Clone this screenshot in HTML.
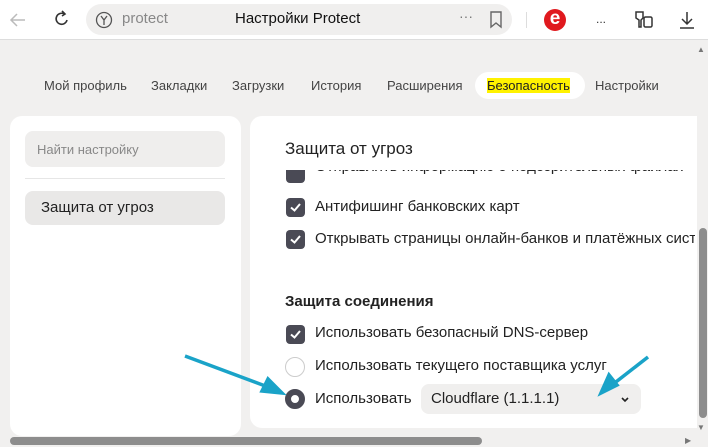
<!DOCTYPE html>
<html><head><meta charset="utf-8"><style>
*{margin:0;padding:0;box-sizing:border-box}
body{width:708px;height:447px;overflow:hidden;background:#f1f0ef;font-family:"Liberation Sans",sans-serif;position:relative;color:#222}
.top{position:absolute;left:0;top:0;width:708px;height:40px;background:#fff;border-bottom:1px solid #ddd}
.abs{position:absolute}
.addr{position:absolute;left:86px;top:4px;width:426px;height:31px;border-radius:16px;background:#f0efee}
.tab{position:absolute;top:78px;font-size:13px;color:#444}
.panel{position:absolute;background:#fff;border-radius:12px}
.cb{position:absolute;left:286px;width:19px;height:19px;border-radius:4px;background:#4a4a55}
.cb svg{position:absolute;left:3px;top:4px}
.t{position:absolute;left:315px;font-size:15px;color:#222;white-space:nowrap}
</style></head><body>
<div class="top">
 <svg class="abs" style="left:8px;top:10px" width="20" height="20"><path d="M17 10H3M9 4L3 10l6 6" stroke="#bbb" stroke-width="1.5" fill="none"/></svg>
 <div class="addr"></div>
 <svg class="abs" style="left:52px;top:9px" width="20" height="20"><path d="M15 11a5.5 5.5 0 1 1-3-6.2" stroke="#333" stroke-width="1.6" fill="none"/><path d="M10 2l3 3-3 2" stroke="#333" stroke-width="1.6" fill="none"/></svg>
 <svg class="abs" style="left:95px;top:11px" width="18" height="18"><circle cx="9" cy="9" r="7.5" stroke="#555" stroke-width="1.3" fill="none"/><path d="M6 5l3 4 3-4M9 9v5" stroke="#555" stroke-width="1.3" fill="none"/></svg>
 <div class="abs" style="left:122px;top:10px;font-size:15px;color:#888">protect</div>
 <div class="abs" style="left:235px;top:10px;font-size:15px;color:#111">Настройки Protect</div>
 <div class="abs" style="left:459px;top:8px;font-size:14px;color:#777">···</div>
 <svg class="abs" style="left:489px;top:10px" width="14" height="20"><path d="M2 2h10v15l-5-4-5 4z" stroke="#666" stroke-width="1.4" fill="none"/></svg>
 <div class="abs" style="left:526px;top:12px;width:1px;height:16px;background:#ddd"></div>
 <div class="abs" style="left:544px;top:9px;width:22px;height:22px;border-radius:50%;background:#e0191e;color:#fff;font-size:19px;line-height:19px;text-align:center;font-weight:bold">e</div>
 <div class="abs" style="left:596px;top:12px;font-size:12px;color:#333">...</div>
 <svg class="abs" style="left:633px;top:9px" width="22" height="22"><path d="M3 3h7v6l-2 2v7H6v-7L3 9z" stroke="#333" stroke-width="1.5" fill="none"/><rect x="11" y="8" width="8" height="10" rx="1.5" stroke="#333" stroke-width="1.5" fill="none"/></svg>
 <svg class="abs" style="left:678px;top:10px" width="18" height="20"><path d="M9 2v12M4 9l5 5 5-5M2 18h14" stroke="#333" stroke-width="1.5" fill="none"/></svg>
</div>
<div class="tab" style="left:44px">Мой профиль</div>
<div class="tab" style="left:151px">Закладки</div>
<div class="tab" style="left:232px">Загрузки</div>
<div class="tab" style="left:311px">История</div>
<div class="tab" style="left:387px">Расширения</div>
<div class="abs" style="left:475px;top:72px;width:110px;height:27px;border-radius:14px;background:#fff"></div>
<div class="tab" style="left:487px;background:#fff200;color:#222">Безопасность</div>
<div class="tab" style="left:595px">Настройки</div>
<div class="panel" style="left:10px;top:116px;width:231px;height:320px"></div>
<div class="abs" style="left:25px;top:131px;width:200px;height:36px;border-radius:8px;background:#efeeed;font-size:13px;color:#888;padding:11px 12px">Найти настройку</div>
<div class="abs" style="left:25px;top:178px;width:200px;height:1px;background:#e6e6e6"></div>
<div class="abs" style="left:25px;top:191px;width:200px;height:34px;border-radius:8px;background:#e9e8e7;font-size:15px;color:#222;padding:8px 16px">Защита от угроз</div>
<div class="panel" style="left:250px;top:116px;width:450px;height:312px;border-radius:12px 0 0 12px"></div>
<div class="abs" style="left:285px;top:139px;font-size:17px;color:#222">Защита от угроз</div>
<div class="cb" style="top:170px;height:13px;border-radius:0 0 4px 4px"></div>
<div class="abs" style="left:315px;top:170px;width:380px;height:6px;overflow:hidden"><div style="font-size:15px;margin-top:-12px;white-space:nowrap">Отправлять информацию о подозрительных файлах</div></div>
<div class="cb" style="top:198px"><svg width="13" height="11"><path d="M2 5.5l3.5 3L11 2" stroke="#fff" stroke-width="2" fill="none"/></svg></div>
<div class="t" style="top:198px">Антифишинг банковских карт</div>
<div class="cb" style="top:230px"><svg width="13" height="11"><path d="M2 5.5l3.5 3L11 2" stroke="#fff" stroke-width="2" fill="none"/></svg></div>
<div class="t" style="top:230px;width:380px;overflow:hidden">Открывать страницы онлайн-банков и платёжных систем</div>
<div class="abs" style="left:285px;top:293px;font-size:15px;font-weight:bold;color:#222">Защита соединения</div>
<div class="cb" style="top:325px"><svg width="13" height="11"><path d="M2 5.5l3.5 3L11 2" stroke="#fff" stroke-width="2" fill="none"/></svg></div>
<div class="t" style="top:324px">Использовать безопасный DNS-сервер</div>
<div class="abs" style="left:285px;top:357px;width:20px;height:20px;border-radius:50%;border:1px solid #ccc"></div>
<div class="t" style="top:357px">Использовать текущего поставщика услуг</div>
<div class="abs" style="left:285px;top:389px;width:20px;height:20px;border-radius:50%;border:6px solid #4a4a55;background:#fff"></div>
<div class="t" style="top:390px">Использовать</div>
<div class="abs" style="left:421px;top:384px;width:220px;height:30px;border-radius:8px;background:#f0efee;font-size:15px;color:#222;padding:6px 10px">Cloudflare (1.1.1.1)</div>
<svg class="abs" style="left:620px;top:396px" width="10" height="8"><path d="M2 2l3 3 3-3" stroke="#222" stroke-width="1.6" fill="none"/></svg>
<svg class="abs" style="left:0;top:0" width="708" height="447"><g stroke="#1aa3c8" stroke-width="3.5" fill="#1aa3c8"><path d="M185 356L268 387" fill="none"/><path d="M282 393l-20-2 6-12z"/><path d="M648 357L612 385" fill="none"/><path d="M601 393l8-18 8 10z"/></g></svg>
<div class="abs" style="left:697px;top:42px;width:11px;height:398px;background:#f1f0ef"></div>
<div class="abs" style="left:699px;top:228px;width:8px;height:190px;border-radius:4px;background:#8d8d8d"></div>
<div class="abs" style="left:697px;top:45px;font-size:8px;color:#777">▲</div>
<div class="abs" style="left:697px;top:423px;font-size:8px;color:#777">▼</div>
<div class="abs" style="left:10px;top:437px;width:472px;height:8px;border-radius:4px;background:#8d8d8d"></div>
<div class="abs" style="left:685px;top:436px;font-size:8px;color:#777">▶</div>
</body></html>
